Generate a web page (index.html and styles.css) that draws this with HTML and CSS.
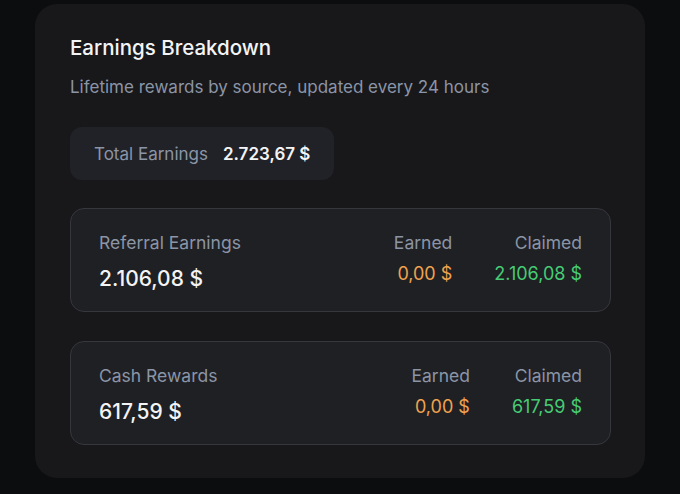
FILE: index.html
```html
<!DOCTYPE html>
<html>
<head>
<meta charset="utf-8">
<link rel="stylesheet" href="styles.css">
</head>
<body>
<div class="page">
  <section class="panel">
    <h1 class="title">Earnings Breakdown</h1>
    <p class="subtitle">Lifetime rewards by source, updated every 24 hours</p>
    <div class="total">
      <span class="total-label">Total Earnings</span>
      <span class="total-value">2.723,67 $</span>
    </div>
    <div class="source">
      <div class="source-main">
        <div class="label">Referral Earnings</div>
        <div class="amount">2.106,08 $</div>
      </div>
      <div class="cols">
        <div class="col">
          <div class="label">Earned</div>
          <div class="earned">0,00 $</div>
        </div>
        <div class="col">
          <div class="label">Claimed</div>
          <div class="claimed">2.106,08 $</div>
        </div>
      </div>
    </div>
    <div class="source">
      <div class="source-main">
        <div class="label">Cash Rewards</div>
        <div class="amount">617,59 $</div>
      </div>
      <div class="cols">
        <div class="col">
          <div class="label">Earned</div>
          <div class="earned">0,00 $</div>
        </div>
        <div class="col">
          <div class="label">Claimed</div>
          <div class="claimed">617,59 $</div>
        </div>
      </div>
    </div>
  </section>
</div>
</body>
</html>
```
FILE: styles.css
```css
* { box-sizing: border-box; }
html, body {
  margin: 0;
  padding: 0;
  background: #0c0d0f;
  font-family: Inter, "Noto Sans", sans-serif;
}
.page {
  width: 680px;
  height: 494px;
  padding: 4px 35px 0 35px;
}
.panel {
  background: #18181b;
  border-radius: 22px;
  height: 474px;
  padding: 30px 34px 0 35px;
}
.title {
  margin: 0;
  font-size: 20.5px;
  font-weight: 500;
  color: #f4f4f5;
  line-height: 28px;
}
.subtitle {
  margin: 13px 0 0 0;
  font-size: 17px;
  line-height: 24px;
  color: #8b95a6;
}
.total {
  display: flex;
  width: fit-content;
  align-items: center;
  gap: 15px;
  margin-top: 28px;
  height: 53px;
  padding: 0 24px;
  background: #212227;
  border-radius: 12px;
}
.total-label {
  font-size: 17px;
  color: #8b95a6;
}
.total-value {
  font-size: 17px;
  font-weight: 600;
  color: #f4f4f5;
}
.source {
  display: flex;
  justify-content: space-between;
  margin-top: 28px;
  height: 104px;
  padding: 22px 28px 0 28px;
  background: #1f2024;
  border: 1px solid #36373d;
  border-radius: 14px;
}
.source + .source { margin-top: 29px; }
.label {
  font-size: 17.5px;
  line-height: 24px;
  color: #8b95a6;
}
.amount {
  margin-top: 10px;
  font-size: 21px;
  line-height: 28px;
  font-weight: 500;
  color: #f4f4f5;
}
.cols {
  display: flex;
  gap: 42px;
}
.col {
  display: flex;
  flex-direction: column;
  align-items: flex-end;
}
.earned, .claimed {
  margin-top: 7px;
  font-size: 18px;
  line-height: 24px;
}
.earned { color: #f0a24e; }
.claimed { color: #46cc74; }
```
